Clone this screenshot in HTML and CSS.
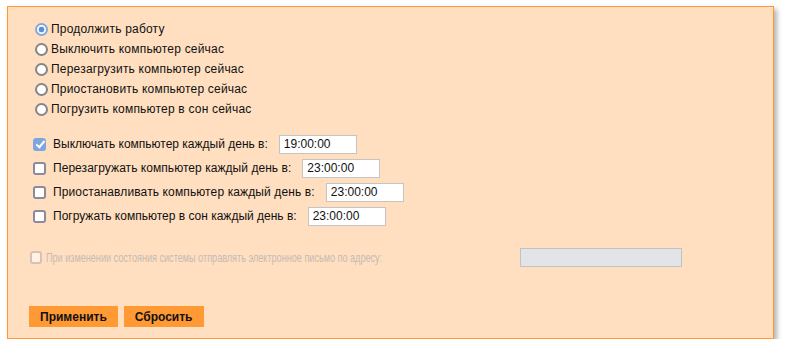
FILE: index.html
```html
<!DOCTYPE html>
<html lang="ru">
<head>
  <meta charset="UTF-8">
  <title>Управление питанием</title>
  <link rel="stylesheet" href="styles.css">
</head>
<body>
  <div class="panel">
    <div class="radio-list">
      <label class="row"><input type="radio" name="action" checked><span>Продолжить работу</span></label>
      <label class="row"><input type="radio" name="action"><span>Выключить компьютер сейчас</span></label>
      <label class="row"><input type="radio" name="action"><span>Перезагрузить компьютер сейчас</span></label>
      <label class="row"><input type="radio" name="action"><span>Приостановить компьютер сейчас</span></label>
      <label class="row"><input type="radio" name="action"><span>Погрузить компьютер в сон сейчас</span></label>
    </div>

    <div class="check-list">
      <div class="row"><input type="checkbox" checked><span class="label">Выключать компьютер каждый день в:</span><input class="time" type="text" value="19:00:00"></div>
      <div class="row"><input type="checkbox"><span class="label reboot">Перезагружать компьютер каждый день в:</span><input class="time" type="text" value="23:00:00"></div>
      <div class="row"><input type="checkbox"><span class="label suspend">Приостанавливать компьютер каждый день в:</span><input class="time" type="text" value="23:00:00"></div>
      <div class="row"><input type="checkbox"><span class="label">Погружать компьютер в сон каждый день в:</span><input class="time" type="text" value="23:00:00"></div>
    </div>

    <div class="mail-row row">
      <input type="checkbox" disabled>
      <span class="label"><span class="narrow">При изменении состояния системы отправлять электронное письмо по адресу:</span></span>
      <input class="mail" type="text" disabled>
    </div>

    <div class="buttons">
      <button class="button">Применить</button>
      <button class="button">Сбросить</button>
    </div>
  </div>
</body>
</html>
```

FILE: styles.css
```css
body {
  margin: 0;
  background-color: white;
  color: #111;
  font-family: "Liberation Sans", Arial, sans-serif;
  font-size: 12px;
}

.panel {
  margin: 6px 0 0 7px;
  width: 765px;
  height: 331px;
  border: 1px solid #ff9933;
  background-color: #ffdfc0;
  box-shadow: 3px 3px 5px rgba(0, 0, 0, 0.3);
}

.row {
  display: flex;
  align-items: center;
}

.radio-list {
  padding: 12px 0 0 27px;
}

.radio-list .row {
  height: 20px;
}

.radio-list span {
  letter-spacing: 0.2px;
}

.radio-list input {
  appearance: none;
  margin: 0 3px 0 0;
  width: 13px;
  height: 13px;
  border: 2px solid #858585;
  border-radius: 50%;
  background-color: white;
}

.radio-list input:checked {
  border-color: #7ea8de;
  background: radial-gradient(circle, #5b8fd8 2.6px, white 3.2px);
}

.check-list {
  margin-top: 13px;
  padding-left: 25px;
}

.check-list .row {
  height: 24px;
}

.check-list .reboot {
  letter-spacing: 0.05px;
}

.check-list .suspend {
  letter-spacing: 0.12px;
}

input[type="checkbox"] {
  appearance: none;
  position: relative;
  margin: 0 7px 0 0;
  width: 13px;
  height: 13px;
  border: 2px solid #8b8b9c;
  border-radius: 3px;
  background-color: white;
}

input[type="checkbox"]:checked {
  border-color: #7ea6de;
  background-color: #7ea6de;
}

input[type="checkbox"]:checked::after {
  content: "";
  position: absolute;
  left: 2.5px;
  top: -0.5px;
  width: 3px;
  height: 7px;
  border: solid white;
  border-width: 0 2px 2px 0;
  transform: rotate(40deg);
}

.time {
  margin-left: 11px;
  width: 78px;
  height: 19px;
  padding: 0 4px;
  box-sizing: border-box;
  border: 1px solid #c4c4c4;
  background-color: white;
  font-family: "Liberation Sans", Arial, sans-serif;
  font-size: 12px;
  color: #111;
  outline: none;
}

.mail-row {
  margin-top: 17px;
  padding-left: 22px;
  height: 24px;
}

.mail-row input[type="checkbox"] {
  margin-right: 4px;
  width: 12px;
  height: 13px;
  border-color: #d4c2b6;
  background-color: #fff1e4;
}

.mail-row .label {
  width: 340px;
  white-space: nowrap;
  color: #c6bbb3;
}

.narrow {
  display: inline-block;
  font-size: 13px;
  transform: scaleX(0.7);
  transform-origin: left center;
}

.mail {
  margin-left: 134px;
  width: 162px;
  height: 19px;
  box-sizing: border-box;
  border: 1px solid #c2c2c2;
  background-color: #e2e4e8;
}

.buttons {
  display: flex;
  gap: 6px;
  margin-top: 37px;
  padding-left: 21px;
}

.button {
  height: 21px;
  padding: 0 11px;
  border: none;
  background-color: #ff9933;
  color: #111;
  font-family: "Liberation Sans", Arial, sans-serif;
  font-size: 12px;
  font-weight: bold;
  cursor: pointer;
}
```
